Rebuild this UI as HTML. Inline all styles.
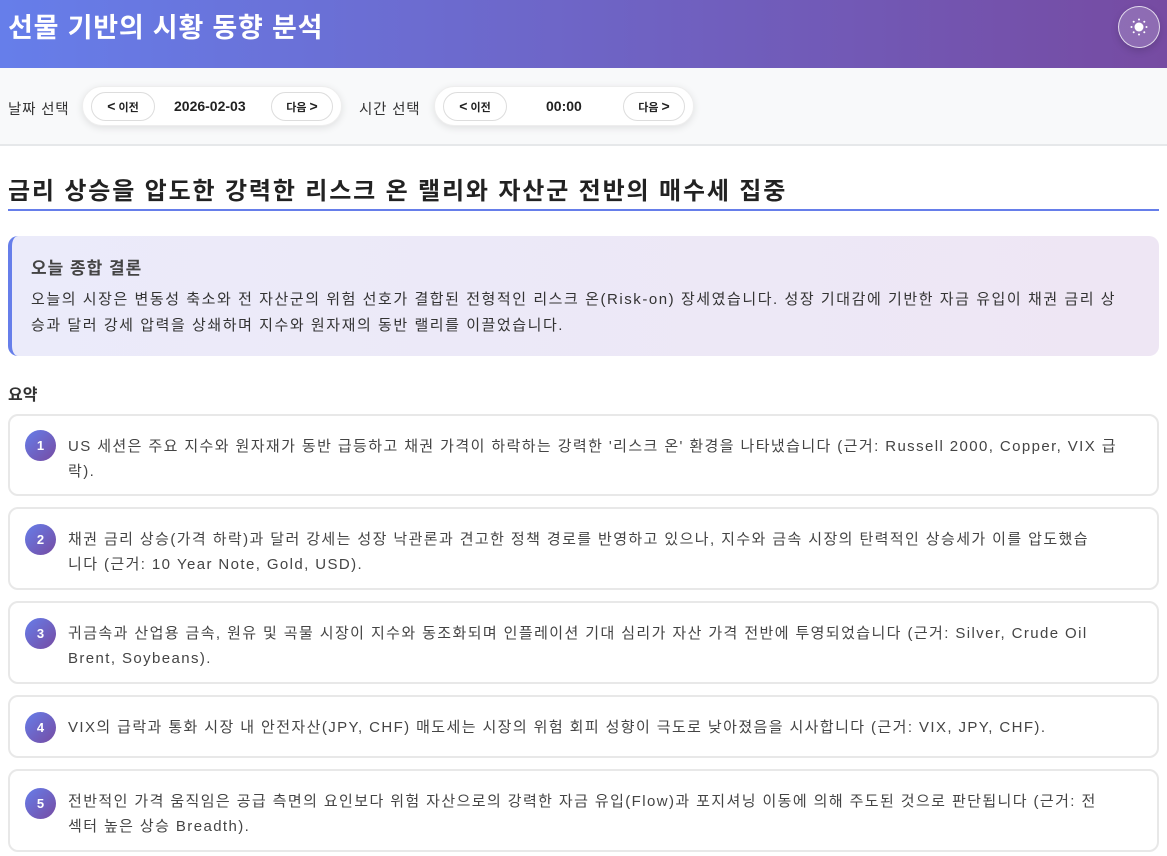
<!DOCTYPE html>
<html><head><meta charset="utf-8"><style>
*{box-sizing:border-box;margin:0;padding:0}
body{width:1167px;height:856px;overflow:hidden;background:#fff;font-family:"Liberation Sans","Noto Sans CJK KR",sans-serif;color:#333}
.hdr{height:68px;background:linear-gradient(90deg,#667eea,#764ba2);position:relative}
.hdr h1{color:#fff;font-size:27px;font-weight:bold;position:absolute;left:8px;top:6px;letter-spacing:0.8px}
.theme{position:absolute;left:1118px;top:6px;width:42px;height:42px;border-radius:50%;border:1.5px solid rgba(255,255,255,.75);background:rgba(255,255,255,.18);box-shadow:0 3px 8px rgba(0,0,0,.15)}
.bar{height:78px;background:#f8f9fa;border-bottom:2px solid #e6e8ea;position:relative}
.lbl{position:absolute;top:30px;font-size:14.5px;color:#333;letter-spacing:0.8px}
.grp{position:absolute;top:18px;height:40px;background:#fff;border-radius:20px;box-shadow:0 2px 8px rgba(0,0,0,.1);border:1px solid #eee}
.btn{position:absolute;top:5px;height:29px;border:1px solid #ddd;border-radius:15px;background:#fff;font-size:11px;font-weight:bold;line-height:27px;text-align:center;color:#222}
.btn b{font-size:14px}
.val{position:absolute;top:11px;font-size:14px;font-weight:bold;color:#222}
h2{position:absolute;left:8px;top:171px;font-size:24px;font-weight:bold;color:#222;letter-spacing:1.85px;white-space:nowrap}
.line{position:absolute;left:8px;top:209px;width:1151px;height:2px;background:#667eea}
.concl{position:absolute;left:8px;top:236px;width:1151px;height:120px;border-radius:10px;border-left:4px solid #667eea;background:linear-gradient(90deg,#ebebfa,#eee6f4);padding:18px 0 0 19px}
.concl h3{font-size:17px;color:#444;font-weight:bold;margin-bottom:8px;letter-spacing:1px}
.concl p{font-size:15px;line-height:26px;color:#333;letter-spacing:1.55px;white-space:nowrap}
.sum{position:absolute;left:8px;top:381px;font-size:16px;font-weight:bold;color:#333}
.card{position:absolute;left:8px;width:1151px;border:2px solid #e8e8e8;border-radius:10px;background:#fff;padding:18px 10px 0 58px;font-size:15px;line-height:25px;color:#444;letter-spacing:1.4px;white-space:nowrap}
.num{position:absolute;left:15px;width:31px;height:31px;border-radius:50%;background:linear-gradient(135deg,#667eea,#764ba2);color:#fff;font-size:13px;font-weight:bold;text-align:center;line-height:31px;letter-spacing:0}
</style></head><body>
<div class="hdr"><h1>선물 기반의 시황 동향 분석</h1>
<div class="theme"><svg width="42" height="42" viewBox="0 0 42 42" style="position:absolute;left:-1.5px;top:-1.5px"><circle cx="21" cy="21" r="4.5" fill="#fff"/><g fill="#fff"><circle cx="21" cy="13.5" r="1"/><circle cx="21" cy="28.5" r="1"/><circle cx="13.5" cy="21" r="1"/><circle cx="28.5" cy="21" r="1"/><circle cx="15.7" cy="15.7" r="1"/><circle cx="26.3" cy="15.7" r="1"/><circle cx="15.7" cy="26.3" r="1"/><circle cx="26.3" cy="26.3" r="1"/></g></svg></div></div>
<div class="bar">
<span class="lbl" style="left:8px">날짜 선택</span>
<div class="grp" style="left:82px;width:260px"><div class="btn" style="left:8px;width:64px"><b>&lt;</b> 이전</div><span class="val" style="left:91px">2026-02-03</span><div class="btn" style="left:188px;width:62px">다음 <b>&gt;</b></div></div>
<span class="lbl" style="left:359px">시간 선택</span>
<div class="grp" style="left:434px;width:260px"><div class="btn" style="left:8px;width:64px"><b>&lt;</b> 이전</div><span class="val" style="left:111px">00:00</span><div class="btn" style="left:188px;width:62px">다음 <b>&gt;</b></div></div>
</div>
<h2>금리 상승을 압도한 강력한 리스크 온 랠리와 자산군 전반의 매수세 집중</h2>
<div class="line"></div>
<div class="concl"><h3>오늘 종합 결론</h3><p>오늘의 시장은 변동성 축소와 전 자산군의 위험 선호가 결합된 전형적인 리스크 온(Risk-on) 장세였습니다. 성장 기대감에 기반한 자금 유입이 채권 금리 상<br>승과 달러 강세 압력을 상쇄하며 지수와 원자재의 동반 랠리를 이끌었습니다.</p></div>
<div class="sum">요약</div>
<div class="card" style="top:414px;height:82px"><div class="num" style="top:14px">1</div>US 세션은 주요 지수와 원자재가 동반 급등하고 채권 가격이 하락하는 강력한 '리스크 온' 환경을 나타냈습니다 (근거: Russell 2000, Copper, VIX 급<br>락).</div>
<div class="card" style="top:507px;height:83px"><div class="num" style="top:15px">2</div>채권 금리 상승(가격 하락)과 달러 강세는 성장 낙관론과 견고한 정책 경로를 반영하고 있으나, 지수와 금속 시장의 탄력적인 상승세가 이를 압도했습<br>니다 (근거: 10 Year Note, Gold, USD).</div>
<div class="card" style="top:601px;height:83px"><div class="num" style="top:15px">3</div>귀금속과 산업용 금속, 원유 및 곡물 시장이 지수와 동조화되며 인플레이션 기대 심리가 자산 가격 전반에 투영되었습니다 (근거: Silver, Crude Oil<br>Brent, Soybeans).</div>
<div class="card" style="top:695px;height:63px"><div class="num" style="top:15px">4</div>VIX의 급락과 통화 시장 내 안전자산(JPY, CHF) 매도세는 시장의 위험 회피 성향이 극도로 낮아졌음을 시사합니다 (근거: VIX, JPY, CHF).</div>
<div class="card" style="top:769px;height:83px"><div class="num" style="top:17px">5</div>전반적인 가격 움직임은 공급 측면의 요인보다 위험 자산으로의 강력한 자금 유입(Flow)과 포지셔닝 이동에 의해 주도된 것으로 판단됩니다 (근거: 전<br>섹터 높은 상승 Breadth).</div>
</body></html>
